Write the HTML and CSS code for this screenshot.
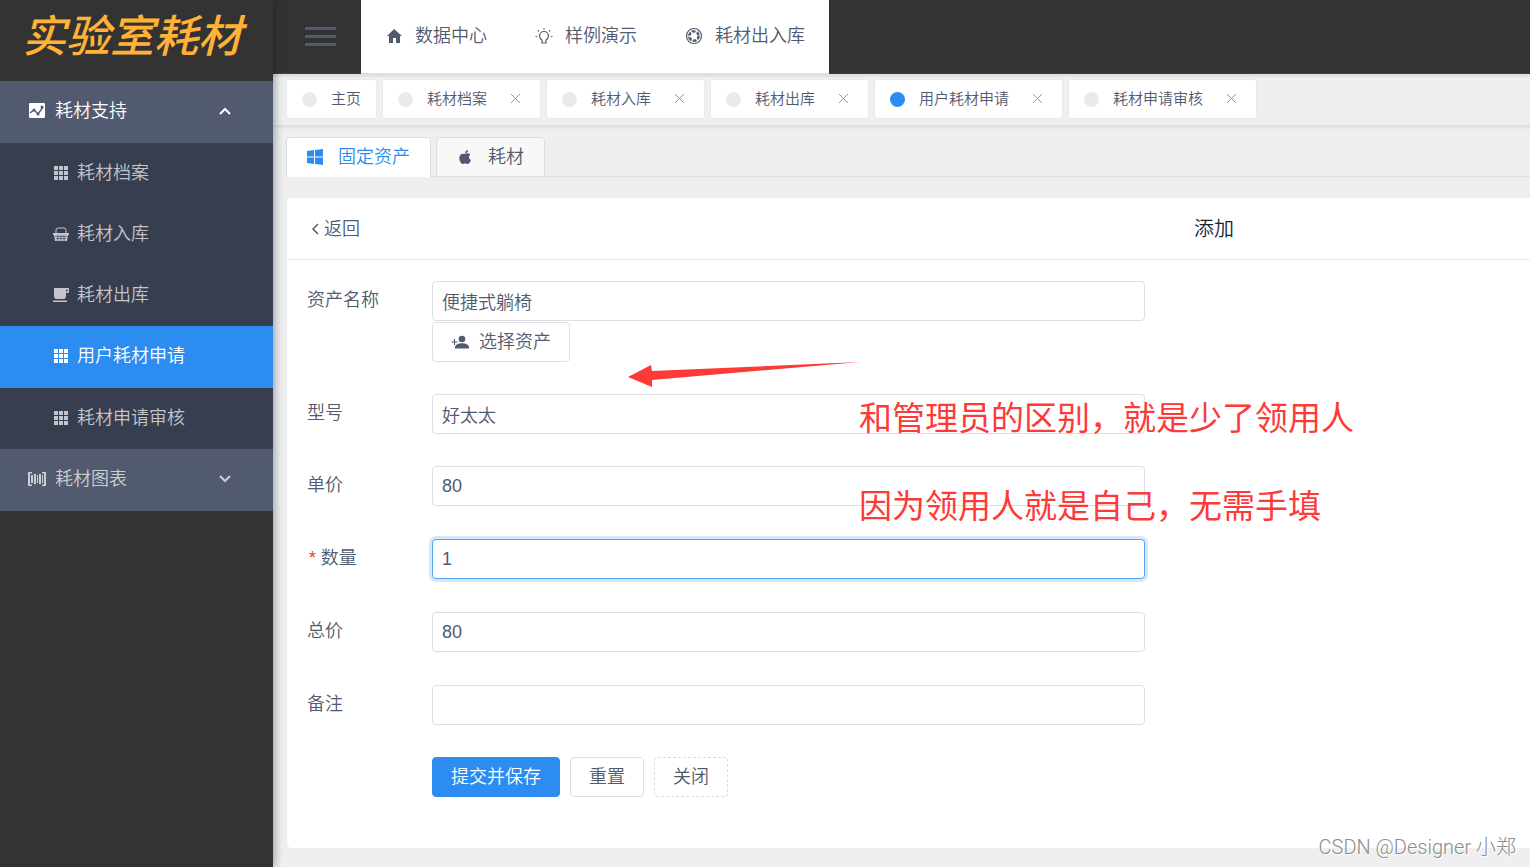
FILE: index.html
```
<!DOCTYPE html>
<html lang="zh-CN">
<head>
<meta charset="utf-8">
<title>实验室耗材</title>
<link rel="stylesheet" href="styles.css">
</head>
<body>
<svg width="0" height="0" class="sprite" aria-hidden="true">
  <symbol id="grid" viewBox="0 0 14 14"><path d="M0 0h4v4H0zM5 0h4v4H5zM10 0h4v4h-4zM0 5h4v4H0zM5 5h4v4H5zM10 5h4v4h-4zM0 10h4v4H0zM5 10h4v4H5zM10 10h4v4h-4z"/></symbol>
  <symbol id="close" viewBox="0 0 11 11"><path d="M1 1l9 9M10 1l-9 9" fill="none" stroke="currentColor"/></symbol>
</svg>
<div class="app">
  <aside class="sidebar">
    <h1 class="logo">实验室耗材</h1>
    <nav>
      <button class="group group--open" type="button" aria-expanded="true">
        <svg class="group-icon" viewBox="0 0 18 18"><rect x="1" y="1" width="16" height="15" rx="1" fill="#fff"/><path d="M2 11l4-3 4 4 5-7" fill="none" stroke="#515a6e" stroke-width="1.4"/><g fill="#515a6e"><circle cx="6" cy="8" r="1.5"/><circle cx="10" cy="12" r="1.5"/><circle cx="14" cy="5" r="1.5"/></g></svg>
        <span>耗材支持</span>
        <svg class="chevron" viewBox="0 0 12 8"><path d="M1 7l5-5 5 5"/></svg>
      </button>
      <ul class="submenu">
        <li><a href="#"><svg class="sub-icon" viewBox="-1 -1 16 16"><use href="#grid" width="14" height="14"/></svg>耗材档案</a></li>
        <li><a href="#"><svg class="sub-icon" viewBox="0 0 16 16"><path d="M3 7V4q0-2 2-2h6q2 0 2 2v3" fill="none" stroke="currentColor"/><path d="M0 7h16v2h-1l-1 6H2L1 9H0z"/><path d="M2 10.500h12M3 12.500h10M5 9v6M8 9v6M11 9v6" stroke="#363e4f" stroke-width=".6"/></svg>耗材入库</a></li>
        <li><a href="#"><svg class="sub-icon" viewBox="0 0 16 16"><path fill-rule="evenodd" d="M1 1h15v4q0 1-1 1h-2v3q0 3-3 3H4q-3 0-3-3zM13 2.500v2h1.500v-2zM0 13.500h14V15H0z"/></svg>耗材出库</a></li>
        <li class="active"><a href="#" aria-current="page"><svg class="sub-icon" viewBox="-1 -1 16 16"><use href="#grid" width="14" height="14"/></svg>用户耗材申请</a></li>
        <li><a href="#"><svg class="sub-icon" viewBox="-1 -1 16 16"><use href="#grid" width="14" height="14"/></svg>耗材申请审核</a></li>
      </ul>
      <button class="group" type="button" aria-expanded="false">
        <svg class="group-icon" viewBox="0 0 18 18"><path d="M0 2h4v1.500H2v11h2V16H0zM18 2h-4v1.500h2v11h-2V16h4zM3 5h2v8H3zM6 4h2v10H6zM9 5h1v8H9zM11 4h2v10h-2zM14 5h1v8h-1z"/></svg>
        <span>耗材图表</span>
        <svg class="chevron" viewBox="0 0 12 8"><path d="M1 1l5 5 5-5"/></svg>
      </button>
    </nav>
  </aside>

  <div class="main">
    <header class="topbar">
      <button class="burger" type="button" aria-label="菜单"><span></span><span></span><span></span></button>
      <nav class="topmenu">
        <a href="#"><svg viewBox="0 0 18 18"><path d="M9 2L2 9h2v7h4v-5h3v5h4V9h2z"/></svg>数据中心</a>
        <a href="#"><svg viewBox="0 0 18 18"><path d="M7 16v-3Q4.500 11.500 4.500 9a4.500 4.500 0 0 1 9 0q0 2.500-2.500 4v3zM9 1v1.500M3 3.500l1 1M15 3.500l-1 1M.500 9.500H2M16 9.500h1.500" fill="none" stroke="currentColor" stroke-width="1.200"/></svg>样例演示</a>
        <a href="#"><svg viewBox="0 0 18 18"><g fill="none" stroke="currentColor"><circle cx="9" cy="9" r="7.500" stroke-width="1.200"/><circle cx="9" cy="9" r="4.600" stroke-width="2.400" stroke-dasharray="3.200 1.617"/><path d="M6 3l5 2M13 4l1 6M15 10l-4 4M11 15l-6-2M4 13L3 8M3 8l4-4" stroke-width=".5"/></g></svg>耗材出入库</a>
      </nav>
    </header>

    <div class="tabs">
      <div class="tab"><i class="dot"></i><a href="#">主页</a></div>
      <div class="tab tab--closable"><i class="dot"></i><a href="#">耗材档案</a><button type="button" aria-label="关闭标签"><svg><use href="#close"/></svg></button></div>
      <div class="tab tab--closable"><i class="dot"></i><a href="#">耗材入库</a><button type="button" aria-label="关闭标签"><svg><use href="#close"/></svg></button></div>
      <div class="tab tab--closable"><i class="dot"></i><a href="#">耗材出库</a><button type="button" aria-label="关闭标签"><svg><use href="#close"/></svg></button></div>
      <div class="tab tab--closable tab--current"><i class="dot"></i><a href="#">用户耗材申请</a><button type="button" aria-label="关闭标签"><svg><use href="#close"/></svg></button></div>
      <div class="tab tab--closable"><i class="dot"></i><a href="#">耗材申请审核</a><button type="button" aria-label="关闭标签"><svg><use href="#close"/></svg></button></div>
    </div>

    <main class="content">
      <div class="subtabs" role="tablist">
        <button class="subtab subtab--current" type="button" role="tab" aria-selected="true"><svg viewBox="0 0 16 16"><path d="M0 2l7-1v6.500H0zM8 1l8-1v7.500H8zM0 8.500h7V15l-7-1zM8 8.500h8V16l-8-1z"/></svg>固定资产</button>
        <button class="subtab" type="button" role="tab" aria-selected="false"><svg viewBox="0 0 16 16"><path d="M8 5c1-.8 4-1.200 5.300.8-2 1.200-1.800 4.200.7 5.200-.8 2-2 4-3.300 4-1 0-1.400-.5-2.400-.5s-1.500.5-2.400.5C4 15 2.300 11.500 2.300 9 2.300 5 5.500 4 8 5zM8 4.200C8 2.500 9.500 1 11 1c.1 1.800-1.200 3.200-3 3.200z"/></svg>耗材</button>
      </div>

      <section class="card">
        <header class="card-head">
          <a class="back" href="#"><svg viewBox="0 0 8 12"><path d="M7 1L2 6l5 5" fill="none" stroke="currentColor" stroke-width="1.500"/></svg>返回</a>
          <h2>添加</h2>
        </header>
        <form class="form">
          <div class="fields fields--asset">
            <div class="field">
              <label for="name">资产名称</label>
              <div class="stack">
                <input id="name" type="text" value="便捷式躺椅">
                <button class="btn btn--pick" type="button"><svg viewBox="0 0 18 18"><circle cx="11" cy="6" r="3.300"/><path d="M4 15.500v-1.500c0-2.500 4-3.800 7-3.800s7 1.300 7 3.800v1.500z"/><path d="M3.500 6v6M.500 9h6" stroke="currentColor" stroke-width="1.100"/></svg>选择资产</button>
              </div>
            </div>
            <div class="field"><label for="model">型号</label><input id="model" type="text" value="好太太"></div>
            <div class="field"><label for="price">单价</label><input id="price" type="text" value="80"></div>
          </div>
          <div class="fields">
            <div class="field"><label class="required" for="count">数量</label><input id="count" class="focused" type="text" value="1"></div>
            <div class="field"><label for="total">总价</label><input id="total" type="text" value="80"></div>
            <div class="field"><label for="remark">备注</label><input id="remark" type="text"></div>
          </div>
          <div class="actions">
            <button class="btn btn--primary" type="submit">提交并保存</button>
            <button class="btn" type="reset">重置</button>
            <button class="btn btn--dashed" type="button">关闭</button>
          </div>
        </form>
      </section>
    </main>

    <svg class="arrow" viewBox="0 0 232 26"><path d="M0 15L23 3l1 6L232 0 24 18v7z"/></svg>
    <p class="note note--first">和管理员的区别，就是少了领用人</p>
    <p class="note note--second">因为领用人就是自己，无需手填</p>
    <p class="watermark">CSDN @Designer 小郑</p>
  </div>
</div>
</body>
</html>
```
FILE: styles.css
```
* { box-sizing: border-box; }

body {
  margin: 0;
  background: #efefef;
  color: #515a6e;
  font: 350 18px/28px "Liberation Sans", "Noto Sans CJK SC", sans-serif;
}

a { color: inherit; text-decoration: none; }
button, input { font: inherit; color: inherit; }
button { cursor: pointer; }
svg { fill: currentColor; flex: none; }
.sprite { position: absolute; }

.app { display: flex; min-height: 100vh; }

/* Sidebar */
.sidebar {
  position: relative;
  z-index: 1;
  flex: 0 0 273px;
  background: #333;
  box-shadow: 2px 0 8px rgba(0, 21, 41, .35);
}
.logo {
  height: 81px;
  margin: 0;
  padding-left: 22px;
  color: #ffb235;
  font-size: 44px;
  font-weight: 500;
  font-style: italic;
  line-height: 74px;
  white-space: nowrap;
}
.group {
  display: flex;
  align-items: center;
  width: 100%;
  height: 62px;
  padding: 0 42px 2px 28px;
  border: 0;
  background: #515a6e;
  color: #cbced3;
  text-align: left;
}
.group--open { color: #fff; }
.group-icon { width: 18px; height: 18px; margin-right: 9px; }
.group span { flex: 1; }
.chevron { width: 12px; height: 8px; fill: none; stroke: currentColor; stroke-width: 2; }
.submenu { margin: 0; padding: 0; list-style: none; background: #363e4f; }
.submenu a {
  display: flex;
  align-items: center;
  gap: 8px;
  height: 61px;
  padding: 0 0 2px 53px;
  color: #c3c5ca;
}
.sub-icon { width: 16px; height: 16px; }
.submenu .active a { height: 62px; background: #2d8cf0; color: #fff; }

/* Top bar */
.main { position: relative; flex: 1; min-width: 0; display: flex; flex-direction: column; }
.topbar { display: flex; height: 74px; background: #333; }
.burger {
  display: flex;
  flex-direction: column;
  justify-content: center;
  gap: 5px;
  width: 88px;
  padding: 0 25px 2px 32px;
  border: 0;
  background: none;
}
.burger span { height: 3px; background: #515a6e; }
.topmenu { display: flex; background: #fff; border-bottom: 1px solid #dcdee2; }
.topmenu a { display: flex; align-items: center; gap: 12px; padding: 0 24px 2px; }
.topmenu svg { width: 18px; height: 18px; }

/* Open pages */
.tabs {
  display: flex;
  gap: 5px;
  padding: 5px 13px 6px;
  box-shadow: inset 0 3px 1px #e0e0e0, 0 2px 2px 1px #e0e0e0;
}
.tab {
  display: flex;
  align-items: center;
  height: 40px;
  padding: 0 15px;
  border: 1px solid #e8eaec;
  border-radius: 3px;
  background: #fff;
  font-size: 15px;
}
.tab--closable { padding-right: 19px; }
.dot { width: 15px; height: 15px; margin-right: 14px; border-radius: 50%; background: #e8eaec; }
.tab--current .dot { background: #2d8cf0; }
.tab button { display: flex; margin-left: 23px; padding: 0 0 2px; border: 0; background: none; color: #999; }
.tab svg { width: 11px; height: 11px; }

/* Content */
.content { flex: 1; display: flex; flex-direction: column; gap: 20px; padding: 12px 0 19px 13px; }
.subtabs { display: flex; align-items: flex-start; gap: 5px; height: 40px; border-bottom: 1px solid #dcdee2; }
.subtab {
  display: flex;
  align-items: center;
  gap: 15px;
  height: 39px;
  padding: 0 20px;
  border: 1px solid #dcdee2;
  border-bottom: 0;
  border-radius: 4px 4px 0 0;
  background: #f8f8f9;
}
.subtab svg { width: 16px; height: 16px; }
.subtab--current { height: 40px; padding-bottom: 2px; background: #fff; color: #2d8cf0; }

.card { flex: 1; border: 1px solid #e8eaec; border-right: 0; border-bottom: 0; border-radius: 5px 0 0 5px; background: #fff; }
.card-head {
  display: flex;
  align-items: center;
  justify-content: space-between;
  height: 62px;
  padding: 0 296px 0 24px;
  border-bottom: 1px solid #e8eaec;
}
.back { display: flex; align-items: center; gap: 5px; }
.back svg { width: 8px; height: 12px; }
.card-head h2 { margin: 0; color: #17233d; font-size: 20px; font-weight: 350; }

/* Form */
.form { max-width: 878px; padding: 21px 20px 40px; }
.fields { display: flex; flex-direction: column; gap: 33px; margin-bottom: 33px; }
.fields--asset { gap: 32px; }
.fields:not(.fields--asset) { margin-bottom: 32px; }
.field { display: grid; grid-template-columns: 125px minmax(0, 1fr); align-items: start; }
.field label { line-height: 38px; }
.required::before { content: "*"; margin-right: 3px; color: #ed4014; font-family: "Liberation Mono", monospace; }
.stack { display: flex; flex-direction: column; align-items: flex-start; gap: 1px; }
input {
  width: 100%;
  height: 40px;
  padding: 0 9px;
  border: 1px solid #dcdee2;
  border-radius: 4px;
  outline: 0;
  background: #fff;
}
.focused { border-color: #57a3f3; box-shadow: 0 0 0 3px rgba(45, 140, 240, .2); }
.actions { display: flex; gap: 10px; padding-left: 125px; }
.btn {
  display: flex;
  align-items: center;
  height: 40px;
  padding: 0 18px;
  border: 1px solid #dcdee2;
  border-radius: 4px;
  background: #fff;
}
.btn--pick { gap: 10px; }
.btn svg { width: 18px; height: 18px; }
.btn--primary { border-color: #2d8cf0; background: #2d8cf0; color: #fff; }
.btn--dashed { border-style: dashed; }

/* Marks over the page */
.arrow { position: absolute; top: 362px; left: 355px; width: 232px; height: 26px; fill: #fc3a38; }
.note {
  position: absolute;
  left: 586px;
  margin: 0;
  color: #fc3a38;
  font-size: 33px;
  font-weight: 400;
  line-height: 48px;
  white-space: nowrap;
}
.note--first { top: 395px; }
.note--second { top: 483px; }
.watermark {
  position: absolute;
  right: 14px;
  bottom: 6px;
  margin: 0;
  color: #8c8c8c;
  font-family: Roboto, "Noto Sans CJK SC", sans-serif;
  font-size: 20px;
  font-weight: 300;
  text-shadow: 1px 1px 0 #fff;
}
```
